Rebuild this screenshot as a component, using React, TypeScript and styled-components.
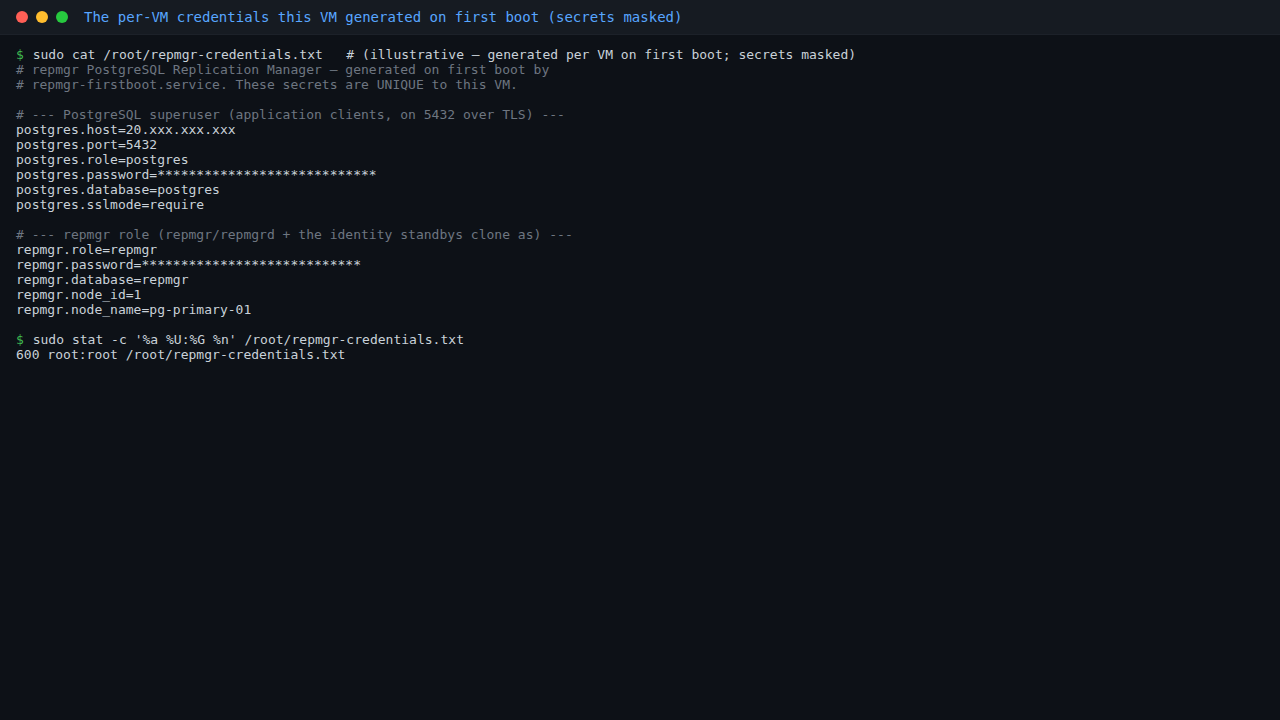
import React from "react";
import styled, { createGlobalStyle } from "styled-components";

const Global = createGlobalStyle`
  html, body { margin: 0; padding: 0; background: #0d1117; }
  body { font-family: "DejaVu Sans Mono", monospace; }
`;

const Window = styled.div`
  width: 1280px;
  height: 720px;
  background: #0d1117;
  display: flex;
  flex-direction: column;
`;

const TitleBar = styled.div`
  height: 35px;
  box-sizing: border-box;
  background: #161b22;
  border-bottom: 1px solid #1c2129;
  display: flex;
  align-items: center;
  padding: 0 16px;
  gap: 8px;
`;

const Dot = styled.span<{ $c: string }>`
  width: 12px;
  height: 12px;
  border-radius: 50%;
  background: ${(p) => p.$c};
  flex: none;
`;

const Title = styled.div`
  margin-left: 8px;
  color: #58a6ff;
  font-family: "DejaVu Sans Mono", monospace;
  font-size: 14px;
  white-space: pre;
`;

const Body = styled.div`
  padding: 12px 16px;
  font-family: "DejaVu Sans Mono", monospace;
  font-size: 13px;
  line-height: 15px;
  letter-spacing: 0.015px;
  color: #c9d1d9;
`;

const Line = styled.div<{ $kind?: "comment" | "out" }>`
  white-space: pre;
  min-height: 15px;
  color: ${(p) => (p.$kind === "comment" ? "#6e7681" : "#c9d1d9")};
`;

const Prompt = styled.span`
  color: #3fb950;
  margin-right: 1px;
`;

const lines: { k?: "comment" | "out" | "cmd"; t: string }[] = [
  { k: "cmd", t: "sudo cat /root/repmgr-credentials.txt   # (illustrative \u2014 generated per VM on first boot; secrets masked)" },
  { k: "comment", t: "# repmgr PostgreSQL Replication Manager \u2014 generated on first boot by" },
  { k: "comment", t: "# repmgr-firstboot.service. These secrets are UNIQUE to this VM." },
  { t: "" },
  { k: "comment", t: "# --- PostgreSQL superuser (application clients, on 5432 over TLS) ---" },
  { t: "postgres.host=20.xxx.xxx.xxx" },
  { t: "postgres.port=5432" },
  { t: "postgres.role=postgres" },
  { t: "postgres.password=****************************" },
  { t: "postgres.database=postgres" },
  { t: "postgres.sslmode=require" },
  { t: "" },
  { k: "comment", t: "# --- repmgr role (repmgr/repmgrd + the identity standbys clone as) ---" },
  { t: "repmgr.role=repmgr" },
  { t: "repmgr.password=****************************" },
  { t: "repmgr.database=repmgr" },
  { t: "repmgr.node_id=1" },
  { t: "repmgr.node_name=pg-primary-01" },
  { t: "" },
  { k: "cmd", t: "sudo stat -c '%a %U:%G %n' /root/repmgr-credentials.txt" },
  { t: "600 root:root /root/repmgr-credentials.txt" },
];

export default function App() {
  return (
    <Window>
      <Global />
      <TitleBar>
        <Dot $c="#ff5f56" />
        <Dot $c="#ffbd2e" />
        <Dot $c="#27c93f" />
        <Title>The per-VM credentials this VM generated on first boot (secrets masked)</Title>
      </TitleBar>
      <Body>
        {lines.map((l, i) =>
          l.k === "cmd" ? (
            <Line key={i}>
              <Prompt>$</Prompt> {l.t}
            </Line>
          ) : (
            <Line key={i} $kind={l.k === "comment" ? "comment" : "out"}>
              {l.t}
            </Line>
          )
        )}
      </Body>
    </Window>
  );
}
